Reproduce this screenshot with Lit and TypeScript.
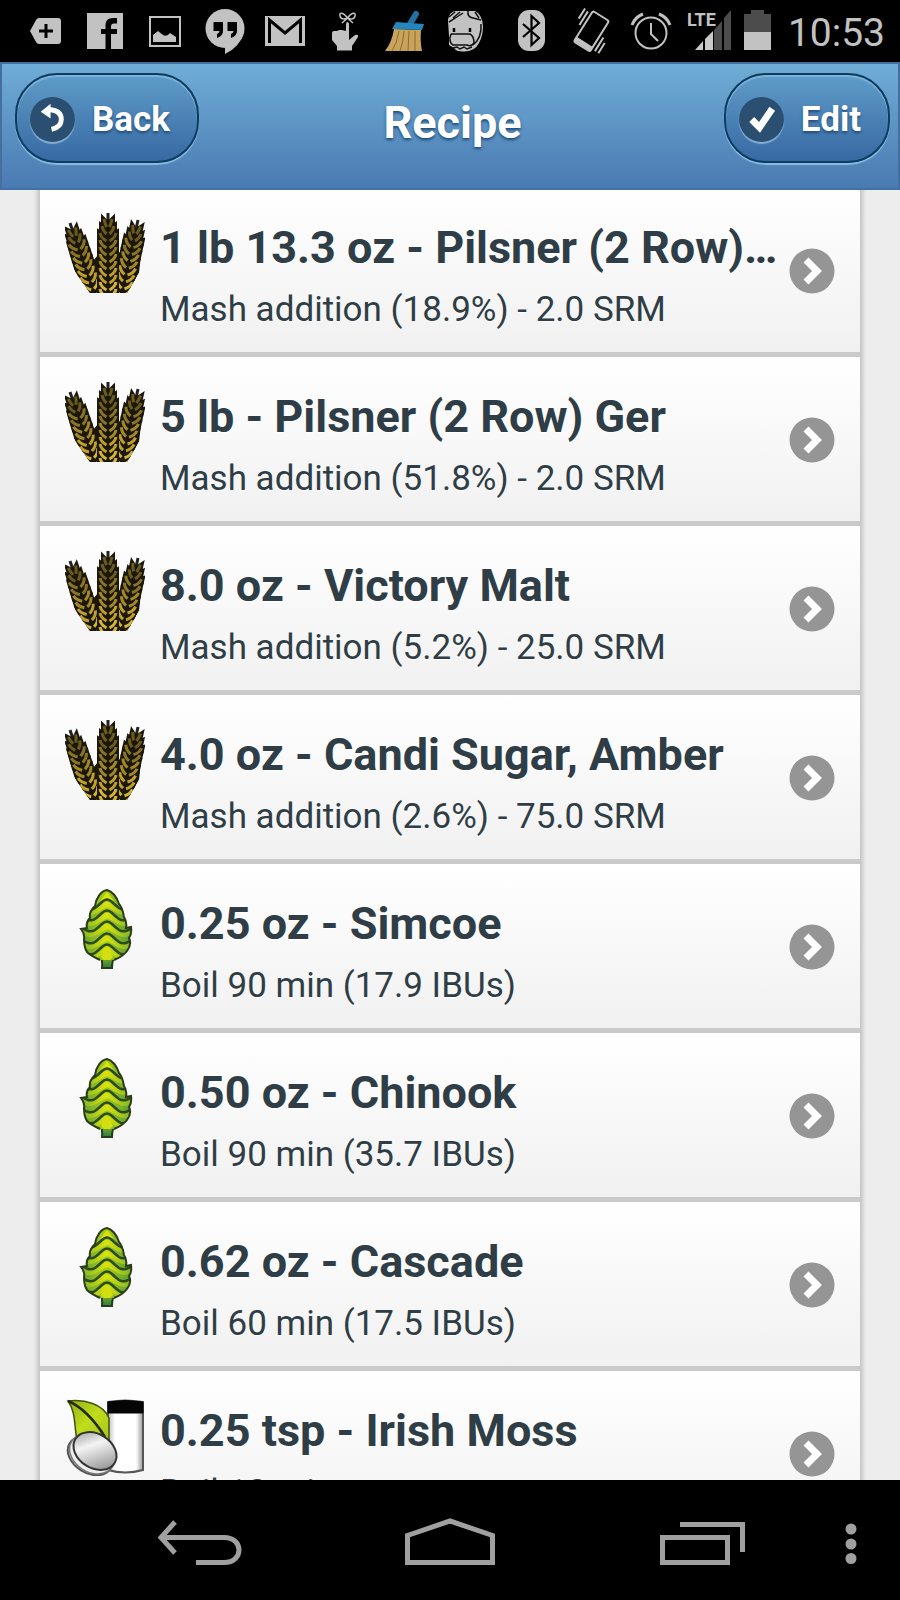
import { LitElement, html, svg, css, TemplateResult } from "lit";
import { customElement, property } from "lit/decorators.js";

type Kind = "grain" | "hop" | "misc";
interface Ingredient {
  kind: Kind;
  title: string;
  detail: string;
}

const INGREDIENTS: Ingredient[] = [
  { kind: "grain", title: "1 lb 13.3 oz - Pilsner (2 Row) Bel", detail: "Mash addition (18.9%) - 2.0 SRM" },
  { kind: "grain", title: "5 lb - Pilsner (2 Row) Ger", detail: "Mash addition (51.8%) - 2.0 SRM" },
  { kind: "grain", title: "8.0 oz - Victory Malt", detail: "Mash addition (5.2%) - 25.0 SRM" },
  { kind: "grain", title: "4.0 oz - Candi Sugar, Amber", detail: "Mash addition (2.6%) - 75.0 SRM" },
  { kind: "hop", title: "0.25 oz - Simcoe", detail: "Boil 90 min (17.9 IBUs)" },
  { kind: "hop", title: "0.50 oz - Chinook", detail: "Boil 90 min (35.7 IBUs)" },
  { kind: "hop", title: "0.62 oz - Cascade", detail: "Boil 60 min (17.5 IBUs)" },
  { kind: "misc", title: "0.25 tsp - Irish Moss", detail: "Boil 10 min" },
];

/* One ear of grain: a dark jagged silhouette with golden kernels in pairs. */
function ear(tipX: number, tipY: number, baseX: number) {
  const length = Math.hypot(baseX - tipX, 80 - tipY);
  const angle = (Math.atan2(tipX - baseX, 80 - tipY) * 180) / Math.PI;
  const steps = Math.ceil((length - 6) / 7);
  const husks = [];
  const kernels = [];
  for (let i = 0; i < steps; i++) {
    const y = 6 + i * 7;
    const w = Math.min(10, 6 + i * 2);
    const k = Math.min(8, 4 + i * 2);
    const shade = SHADES[Math.floor((i / steps) * SHADES.length)];
    husks.push(svg`<path d="M${-w} ${y - 3}L${-w} ${y + 4}L0 ${y + 12}L${w} ${y + 4}L${w} ${y - 3}L0 ${y + 3}Z" fill="#1b180b" stroke="#1b180b" stroke-width="2"/>`);
    kernels.push(svg`<path d="M${-k} ${y}Q${-k + 1} ${y + 5} -1.500 ${y + 8}M${k} ${y}Q${k - 1} ${y + 5} 1.500 ${y + 8}" fill="none" stroke=${shade} stroke-width="3"/>`);
  }
  return svg`<g transform="translate(${tipX} ${tipY}) rotate(${angle})">
    <path d="M0 0V10" stroke="#222" stroke-width="3"/>${husks}${kernels}</g>`;
}

const SHADES = ["#6b5b1d", "#8a7524", "#a38926", "#c0a02b", "#d6b435"];

const grainIcon = html`<svg viewBox="0 0 80 80" aria-hidden="true">
  <defs><clipPath id="sheaf"><path d="M-2 -2H82V24L75 58L62 80H25L9 57L-2 18Z"/></clipPath></defs>
  <g clip-path="url(#sheaf)">
    <path d="M10 42L12 60L25 80H62L74 60L76 42L60 44L43 30L28 48Z" fill="#1b180b"/>
    ${ear(5, 10, 29)}${ear(73, 7, 57)}${ear(43, 0, 43)}
  </g>
</svg>`;

const SCALES = [11, 22, 33, 45, 56];

const hopIcon = html`<svg viewBox="0 0 80 80" aria-hidden="true">
  <defs>
    <linearGradient id="hop" x1="0" x2="1"><stop offset="0" stop-color="#4f9436"/><stop offset=".5" stop-color="#a5cb1c"/><stop offset="1" stop-color="#4f9436"/></linearGradient>
    <linearGradient id="stem" y2="1" x2="0"><stop offset="0" stop-color="#8abb2c"/><stop offset="1" stop-color="#2f7a3c"/></linearGradient>
    <linearGradient id="scale" gradientUnits="userSpaceOnUse" x1="17" x2="66"><stop offset="0" stop-color="#7fb62b"/><stop offset=".5" stop-color="#dbe30a"/><stop offset="1" stop-color="#7fb62b"/></linearGradient>
    <clipPath id="cone"><path d="M42 1C36 2 31 9 30 17C26 21 24 25 25 29C22 32 21 35 22 39L16 40Q20 45 19 50C19 55 20 60 22 63C26 67 31 69 35 71H49C54 69 59 66 62 62C65 58 66 53 64 49Q67 45 66 38L61 39C62 34 61 31 59 28C58 22 57 18 54 15C52 8 47 2 42 1Z"/></clipPath>
  </defs>
  <path d="M34 66Q38 70 37 79H47Q47 70 51 66Z" fill="url(#stem)" stroke="#273c1c" stroke-width="2"/>
  <g clip-path="url(#cone)">
    <path d="M10 0H70V74H10Z" fill="url(#hop)"/>
    <path d="M42 3L35 12L42 9L49 12Z" fill="#dbe30a"/>
    ${SCALES.map((p) => svg`
      <path d="M15 ${p + 9}Q24 ${p + 15} 30 ${p + 11}Q34 ${p + 9} 37 ${p + 7}Q42 ${p + 2} 47 ${p + 7}Q50 ${p + 9} 54 ${p + 11}Q60 ${p + 15} 69 ${p + 9}" fill="none" stroke="url(#scale)" stroke-width="5"/>
      <path d="M15 ${p + 4}Q24 ${p + 12} 30 ${p + 8}Q34 ${p + 5} 37 ${p + 2}Q42 ${p - 3} 47 ${p + 2}Q50 ${p + 5} 54 ${p + 8}Q60 ${p + 12} 69 ${p + 4}" fill="none" stroke="#2c4a1c" stroke-width="2.500"/>`)}
    <path d="M42 58L36 68L42 74L48 68Z" fill="#d2df10"/>
  </g>
  <path d="M35 71C31 69 26 67 22 63C20 60 19 55 19 50Q20 45 16 40L22 39C21 35 22 32 25 29C24 25 26 21 30 17C31 9 36 2 42 1C47 2 52 8 54 15C57 18 58 22 59 28C61 31 62 34 61 39L66 38Q67 45 64 49C66 53 65 58 62 62C59 66 54 69 49 71" fill="none" stroke="#2b3b18" stroke-width="2"/>
</svg>`;

const miscIcon = html`<svg viewBox="0 0 80 80" aria-hidden="true">
  <defs>
    <linearGradient id="leaf" x2="1" y2="1"><stop offset="0" stop-color="#8fb01e"/><stop offset=".5" stop-color="#c0dc1c"/><stop offset="1" stop-color="#a6c51d"/></linearGradient>
    <linearGradient id="coin" x2="1" y2=".6"><stop offset="0" stop-color="#8d8d8d"/><stop offset=".45" stop-color="#f4f4f4"/><stop offset="1" stop-color="#9a9a9a"/></linearGradient>
    <linearGradient id="jar" x2="1"><stop offset="0" stop-color="#bbb"/><stop offset=".2" stop-color="#fff"/><stop offset=".8" stop-color="#fff"/><stop offset="1" stop-color="#999"/></linearGradient>
  </defs>
  <path d="M43 6Q60 3 78 6V74Q60 79 43 74Z" fill="url(#jar)" stroke="#555" stroke-width="2"/>
  <path d="M43 6Q60 3 78 6V17H43Z" fill="#050505" stroke="#050505"/>
  <path d="M3 5C20 3 38 8 44 22V44H12C9 30 11 16 3 5Z" fill="url(#leaf)" stroke="#46520e" stroke-width="1.500"/>
  <path d="M3 5C17 11 30 25 40 41" fill="none" stroke="#222c07" stroke-width="2.500"/>
  <ellipse cx="25" cy="60" rx="24" ry="17" transform="rotate(32 25 60)" fill="#d6d6d6" stroke="#555" stroke-width="2"/>
  <ellipse cx="27" cy="58" rx="24" ry="18" transform="rotate(32 27 58)" fill="#eee" stroke="#777" stroke-width="1.500"/>
  <ellipse cx="30" cy="55" rx="23" ry="17" transform="rotate(32 30 55)" fill="url(#coin)" stroke="#333" stroke-width="2"/>
</svg>`;

const ICONS: Record<Kind, TemplateResult> = { grain: grainIcon, hop: hopIcon, misc: miscIcon };

const BAR = "#c2c2c2";

const STATUS_ICONS = [
  svg`<path d="M15 31L21 20Q22 18 24 18H43Q46 18 46 21V41Q46 44 43 44H24Q22 44 21 42Z" fill=${BAR}/>
    <path d="M24 31H38M31 24V38" stroke="#000" stroke-width="3"/>`,
  svg`<path d="M12 13H48V49H12Z" fill=${BAR}/>
    <path d="M30.500 49V34H26V29H30.500V25Q30.500 18 38 18H42V23.500H39Q36 23.500 36 26.500V29H42V34H36V49Z"/>`,
  svg`<path d="M15 17H45V46H15Z" fill="none" stroke=${BAR} stroke-width="2"/>
    <path d="M18 42V35L23 31L28 35Q32 37 35 33L41 37V42Z" fill=${BAR}/>`,
  svg`<circle cx="30" cy="28.500" r="19.500" fill=${BAR}/><path d="M30 44V54Q45 47 49 32Z" fill=${BAR}/>
    <path d="M18.500 22H28V31Q28 36 22 38V34Q24.500 33 24.500 31H18.500Z"/>
    <path d="M32.500 22H42V31Q42 36 36 38V34Q38.500 33 38.500 31H32.500Z"/>`,
  svg`<path d="M10 16H50V46H10Z" fill=${BAR}/>
    <path d="M14.500 43V20L30 33L45.500 20V43" fill="none" stroke="#000" stroke-width="3"/>`,
  svg`<path d="M31 25Q31 22 32.500 22Q34 22 34 25V40L40 35Q44 34 43 37L37 46V50.500H22V46L17 40V33Q17 31 19 31H22L24 30H27L31 31Z" fill=${BAR}/>
    <path d="M32.500 18C28 12 24 12 25 16C26 20 30 19 32.500 18C37 12 41 12 40 16C39 20 35 19 32.500 18L27 23M32.500 18L38 23" fill="none" stroke=${BAR} stroke-width="1.500"/>`,
  svg`<path d="M19 29L46 30Q45 42 47 51H10Q17 42 19 29Z" fill="#c9a35a"/>
    <path d="M24 31Q22 43 17 51M29 31Q28 43 25 51M34 31L33 51M40 31L40 51" stroke="#8e6c31" stroke-width="1" fill="none"/>
    <path d="M41 14L35 24" stroke="#2471a3" stroke-width="6" stroke-linecap="round"/>
    <path d="M21 22L49 24L47 30L17 29Z" fill="#2585bd"/>`,
  svg`<path d="M13 20Q14 11 22 11H40Q47 14 48 26Q48 36 44 43Q40 51 30 51.500Q21 52 19 48L14 45V36Z" fill=${BAR}/>
    <path d="M14 17L20 12M18 18L25 12M33 11Q32 17 38 18L46 20M14 22Q22 17 28 13M40 12L44 18M46 24Q47 38 38 45M16 34H35Q39 36 39 43Q36 47 32 45H18Q13 42 16 34M18 48L22 47L25 49L29 47L32 49L37 47" fill="none" stroke="#111" stroke-width="1.500"/>
    <path d="M19 28V32M35 28V32" stroke="#000" stroke-width="2.500"/>`,
  svg`<rect x="17" y="10" width="27" height="41" rx="11" fill=${BAR}/>
    <path d="M22 24L38 38L30.500 45V16L38 23L22 37" fill="none" stroke="#000" stroke-width="2.200"/>`,
  svg`<g transform="rotate(32 30 31)" fill="none" stroke=${BAR} stroke-width="2">
    <rect x="21" y="13" width="19" height="36" rx="2"/><path d="M21 46H40" stroke-width="5"/>
    <path d="M17 16V32M13 15V27M44 30V46M48 34V46"/></g>`,
  svg`<g fill="none" stroke=${BAR} stroke-width="2"><circle cx="30" cy="33" r="15.500"/>
    <path d="M30 23V34L37 41"/><path d="M11 25Q14 17 22 14M49 25Q46 17 38 14" stroke-width="3"/></g>`,
];

@customElement("status-bar")
export class StatusBar extends LitElement {
  static styles = css`
    :host { display: flex; align-items: center; height: 62px; padding: 0 15px; background: #000; color: #c2c2c2; font-family: Roboto, sans-serif; }
    .group { display: flex; align-items: center; }
    .cell { display: block; width: 60px; height: 62px; }
    .radios { margin-left: auto; }
    .signal { position: relative; }
    .network { position: absolute; left: 6px; top: 10px; font: bold 18px/20px Roboto, sans-serif; }
    .battery { display: block; width: 35px; height: 62px; }
    .time { font-size: 39px; line-height: 48px; margin: 4px 0 0 12px; }
  `;
  render() {
    const cell = (icon: unknown) => html`<svg class="cell" viewBox="0 0 60 62" aria-hidden="true">${icon}</svg>`;
    return html`
      <div class="group">${STATUS_ICONS.slice(0, 8).map(cell)}</div>
      <div class="group radios">
        ${STATUS_ICONS.slice(8).map(cell)}
        <div class="signal">
          <svg class="cell" viewBox="0 0 60 62" aria-hidden="true">
            <path d="M14 50L22 41V50ZM24 50V39L32 31V50Z" fill="#c9c9c9"/>
            <path d="M33 50V30L41 21V50ZM43 50V18L50 10V50Z" fill="#4c4c4c"/>
          </svg>
          <span class="network">LTE</span>
        </div>
        <svg class="battery" viewBox="0 0 35 62" aria-hidden="true">
          <path d="M3 14H10V10H23V14H30V32H3Z" fill="#4c4c4c"/><path d="M3 32H30V50H3Z" fill="#c2c2c2"/>
        </svg>
        <span class="time">10:53</span>
      </div>`;
  }
}

@customElement("recipe-header")
export class RecipeHeader extends LitElement {
  static styles = css`
    :host { display: grid; grid-template-columns: 1fr auto 1fr; align-items: start; box-sizing: border-box; height: 128px; padding: 9px 8px 0 13px; position: relative; z-index: 1; border: 2px solid #44709f; border-bottom-color: #456fa6; background: linear-gradient(#6fadd6, #4a7ab2); color: #fff; font-family: Roboto, sans-serif; text-shadow: 0 2px 3px #1f4b78; }
    h1 { margin: 0; font-size: 45px; line-height: 100px; font-weight: bold; }
    button { display: flex; align-items: center; gap: 17px; height: 90px; padding: 0 27px 0 13px; border: 2px solid #0c3d60; border-radius: 42px; background: linear-gradient(#5f9cc8, #3769a3); box-shadow: 0 2px 1px #8bbce0, inset 0 2px 1px #7fb4da; color: inherit; font: bold 35px/44px Roboto, sans-serif; text-shadow: inherit; }
    .edit { justify-self: end; }
    .back { justify-self: start; }
    .label { padding-top: 4px; }
    .disc { width: 45px; height: 45px; margin-top: 3px; border-radius: 50%; background: #2b4f70; box-shadow: 0 2px 1px #86b0d4; }
  `;
  render() {
    return html`
      <button class="back" type="button">
        <svg class="disc" viewBox="0 0 46 46" aria-hidden="true">
          <path d="M20 13H21Q32 14 32 23Q32 31 22 33" fill="none" stroke="#fff" stroke-width="5"/>
          <path d="M11 15L21 7V22Z" fill="#fff"/>
        </svg><span class="label">Back</span>
      </button>
      <h1>Recipe</h1>
      <button class="edit" type="button">
        <svg class="disc" viewBox="0 0 46 46" aria-hidden="true">
          <path d="M13 23L21 31L34 12" fill="none" stroke="#fff" stroke-width="7"/>
        </svg><span class="label">Edit</span>
      </button>`;
  }
}

@customElement("ingredient-row")
export class IngredientRow extends LitElement {
  @property({ attribute: false }) item!: Ingredient;
  static styles = css`
    :host { display: block; }
    .row { display: flex; align-items: center; gap: 15px; padding: 25px 25px 18px; border-bottom: 5px solid #cacaca; background: linear-gradient(#fff, #f1f1f1); color: #2f3e46; text-decoration: none; text-shadow: 0 1px 0 #fff; font-family: Roboto, sans-serif; }
    .picture { flex: none; align-self: flex-start; width: 80px; height: 80px; }
    .picture svg { display: block; }
    .text { flex: 1; min-width: 0; padding-top: 5px; }
    .title, .detail { margin: 0; white-space: nowrap; overflow: hidden; text-overflow: ellipsis; }
    .title { font-size: 45px; line-height: 60px; font-weight: bold; }
    .detail { margin-top: 8px; font-size: 35px; line-height: 48px; }
    .go { flex: none; width: 46px; height: 46px; margin: 0 0 5px -8px; }
  `;
  render() {
    return html`<a class="row" href="#">
      <div class="picture">${ICONS[this.item.kind]}</div>
      <div class="text">
        <h3 class="title">${this.item.title}</h3>
        <p class="detail">${this.item.detail}</p>
      </div>
      <svg class="go" viewBox="0 0 46 46" aria-hidden="true">
        <circle cx="23" cy="23" r="22.500" fill="#959595"/>
        <path d="M17 12L28 23L17 34" fill="none" stroke="#fff" stroke-width="7"/>
      </svg>
    </a>`;
  }
}

@customElement("navigation-bar")
export class NavigationBar extends LitElement {
  static styles = css`
    :host { display: grid; grid-template-columns: 1fr 1fr 1fr 52px; height: 120px; padding: 0 23px 0 75px; background: #000; }
    button { display: grid; place-items: center; padding: 0; border: 0; background: none; }
    svg { display: block; fill: none; stroke: #a0a0a0; }
  `;
  render() {
    return html`
      <button type="button" aria-label="Back">
        <svg width="90" height="56" viewBox="0 0 90 56">
          <path d="M41 50.500H69C89 50.500 89 25.500 69 25.500H7" stroke-width="5"/>
          <path d="M20 10L6 25.500L20 41" stroke-width="5"/>
        </svg>
      </button>
      <button type="button" aria-label="Home">
        <svg width="90" height="56" viewBox="0 0 90 56"><path d="M2.500 50.500V23.500L45 9L87.500 23.500V50.500Z" stroke-width="5"/></svg>
      </button>
      <button type="button" aria-label="Recent apps">
        <svg width="90" height="56" viewBox="0 0 90 56"><path d="M7.500 25.500H72.500V50.500H7.500ZM25 12.500H87.500V40" stroke-width="5"/></svg>
      </button>
      <button type="button" aria-label="More">
        <svg width="12" height="50" viewBox="0 0 12 50"><g fill="#a0a0a0" stroke="none"><circle cx="6" cy="14" r="5.500"/><circle cx="6" cy="29" r="5.500"/><circle cx="6" cy="43.500" r="5.500"/></g></svg>
      </button>`;
  }
}

@customElement("app-root")
export class AppRoot extends LitElement {
  static styles = css`
    :host { display: flex; flex-direction: column; height: 100vh; background: #ededed; }
    main { flex: 1; min-height: 0; overflow-y: auto; scrollbar-width: none; margin-top: -2px; }
    ul { list-style: none; margin: 0 40px; padding: 0; box-shadow: 0 0 4px 3px #c4c4c4; }
  `;
  render() {
    return html`
      <status-bar></status-bar>
      <recipe-header></recipe-header>
      <main>
        <ul>${INGREDIENTS.map((item) => html`<li><ingredient-row .item=${item}></ingredient-row></li>`)}</ul>
      </main>
      <navigation-bar></navigation-bar>`;
  }
}
